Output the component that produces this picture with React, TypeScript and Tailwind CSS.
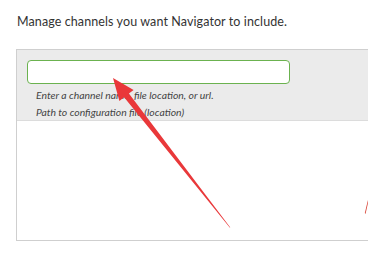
import React from "react";

export default function App() {
  return (
    <div className="relative w-[368px] h-[258px] overflow-hidden bg-white" style={{ fontFamily: "Lato, 'Open Sans', sans-serif" }}>
      <div className="flex flex-col pl-[16px] pt-[13px]">
        <p className="pl-[1px] text-[12.5px] leading-[17px] text-[#333] tracking-[0.1px]">Manage channels you want Navigator to include.</p>
        <div className="mt-[19px] w-[400px] h-[192px] border border-[#cfcfcf] flex flex-col">
          <div className="flex flex-col bg-[#ebebeb] pl-[10px] pt-[10px] h-[71px] border-b border-[#dcdcdc]">
            <div className="w-[263px] h-[25px] bg-white border border-[#6bb24f] rounded-[4px]"></div>
            <div className="flex flex-col pl-[9px] pt-[2px] italic text-[10.4px] text-[#444]">
              <p className="leading-[18px]">Enter a channel name, file location, or url.</p>
              <p className="leading-[16px]">Path to configuration file (location)</p>
            </div>
          </div>
          <div className="flex-1"></div>
        </div>
      </div>

      <svg className="absolute left-0 top-0" width="368" height="258" viewBox="0 0 368 258">
        <polygon
          points="113,78 133.6,89.9 128.9,93.6 230.3,227.6 229.7,227.4 124.1,97.2 119.4,100.9"
          fill="#e9383a"
        />
        <polygon points="368,200 368,203 365.5,214 364.8,213" fill="#d9473a" />
      </svg>
    </div>
  );
}
